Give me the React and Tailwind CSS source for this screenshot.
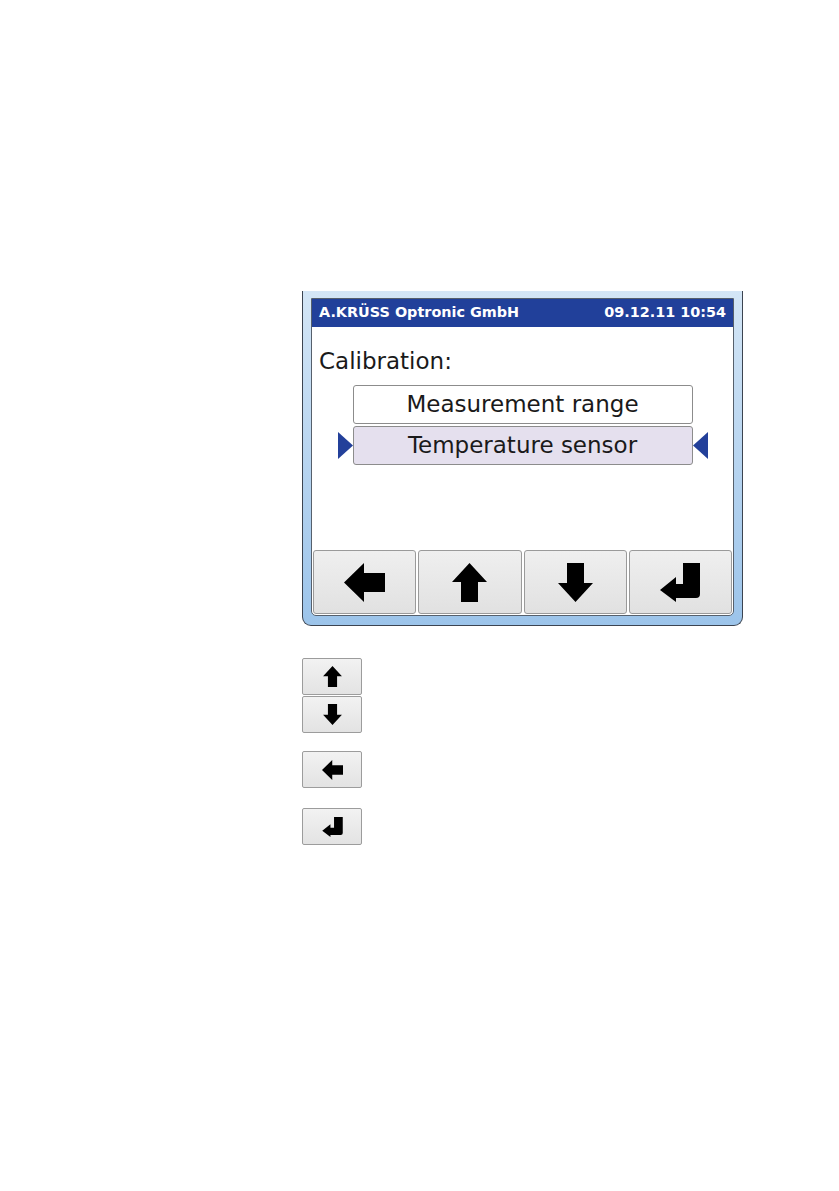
const font = { fontFamily: '"DejaVu Sans", "Liberation Sans", sans-serif' };

function LeftArrow({ w = 41, h = 39 }) {
  return (
    <svg width={w} height={h} viewBox="0 0 41 39">
      <polygon points="0,19.5 20,0 20,10 41,10 41,29 20,29 20,39" fill="#000" />
    </svg>
  );
}

function UpArrow({ w = 35, h = 39 }) {
  return (
    <svg width={w} height={h} viewBox="0 0 35 39">
      <polygon points="17.5,0 35,19 26,19 26,39 9,39 9,19 0,19" fill="#000" />
    </svg>
  );
}

function DownArrow({ w = 35, h = 39 }) {
  return (
    <svg width={w} height={h} viewBox="0 0 35 39">
      <polygon points="9,0 26,0 26,20 35,20 17.5,39 0,20 9,20" fill="#000" />
    </svg>
  );
}

function EnterArrow({ w = 40, h = 39 }) {
  return (
    <svg width={w} height={h} viewBox="0 0 40 39">
      <path d="M23 0 H40 V31 Q40 35 36 35 H16 V39 L0 27 L16 14 V21 H23 Z" fill="#000" />
    </svg>
  );
}

// small keys shown in the legend below the screen
function Key({ children, className = '' }) {
  return (
    <div
      className={`w-[60px] h-[37px] flex items-center justify-center border border-[#9c9c9c] rounded-[2px] bg-gradient-to-b from-[#f2f2f2] to-[#e3e3e3] ${className}`}
    >
      {children}
    </div>
  );
}

function SoftButton({ children }) {
  return (
    <div className="flex-1 h-[64px] flex items-center justify-center border border-[#9a9a9a] rounded-[3px] bg-gradient-to-b from-[#efefef] to-[#e1e1e1]">
      {children}
    </div>
  );
}

function MenuRow({ label, selected }) {
  return (
    <div className="flex items-center justify-center">
      <svg width="15" height="27" viewBox="0 0 15 27" className={selected ? '' : 'invisible'}>
        <polygon points="0,0 15,13.5 0,27" fill="#23409a" />
      </svg>
      <div
        className={`w-[340px] h-[39px] flex items-center justify-center border border-[#8c8c8c] rounded-[3px] text-[23px] text-[#1a1a1a] ${
          selected ? 'bg-[#e5e0ee]' : 'bg-white'
        }`}
      >
        {label}
      </div>
      <svg width="15" height="27" viewBox="0 0 15 27" className={selected ? '' : 'invisible'}>
        <polygon points="15,0 0,13.5 15,27" fill="#23409a" />
      </svg>
    </div>
  );
}

export default function App() {
  return (
    <div className="w-[839px] h-[1191px] bg-white pl-[302px] pt-[291px]" style={font}>
      {/* device window */}
      <div className="w-[441px] h-[335px] flex flex-col border-x border-b border-[#3c4450] rounded-b-[9px] bg-gradient-to-b from-[#d4e6f6] to-[#9cc4ea] px-[8px] pt-[7px] pb-[9px]">
        <div className="flex-1 flex flex-col bg-white border border-[#56606c] rounded-b-[5px] overflow-hidden">
          <div className="h-[28px] shrink-0 flex items-center justify-between px-[7px] bg-[#21409a] text-white font-bold text-[14.4px]">
            <span>A.KRÜSS Optronic GmbH</span>
            <span>09.12.11 10:54</span>
          </div>

          <div className="pl-[7px] mt-[20px] text-[23px] leading-[28px] text-[#1a1a1a]">Calibration:</div>

          <div className="mt-[10px] flex flex-col gap-[2px]">
            <MenuRow label="Measurement range" />
            <MenuRow label="Temperature sensor" selected />
          </div>

          <div className="mt-auto flex gap-[2px] px-[1px] pb-[1px]">
            <SoftButton><LeftArrow /></SoftButton>
            <SoftButton><UpArrow /></SoftButton>
            <SoftButton><DownArrow /></SoftButton>
            <SoftButton><EnterArrow /></SoftButton>
          </div>
        </div>
      </div>

      {/* key legend */}
      <div className="mt-[32px] flex flex-col">
        <Key><UpArrow w={19} h={21} /></Key>
        <Key className="mt-[1px]"><DownArrow w={19} h={21} /></Key>
        <Key className="mt-[18px]"><LeftArrow w={21} h={20} /></Key>
        <Key className="mt-[20px]"><EnterArrow w={21} h={20} /></Key>
      </div>
    </div>
  );
}
